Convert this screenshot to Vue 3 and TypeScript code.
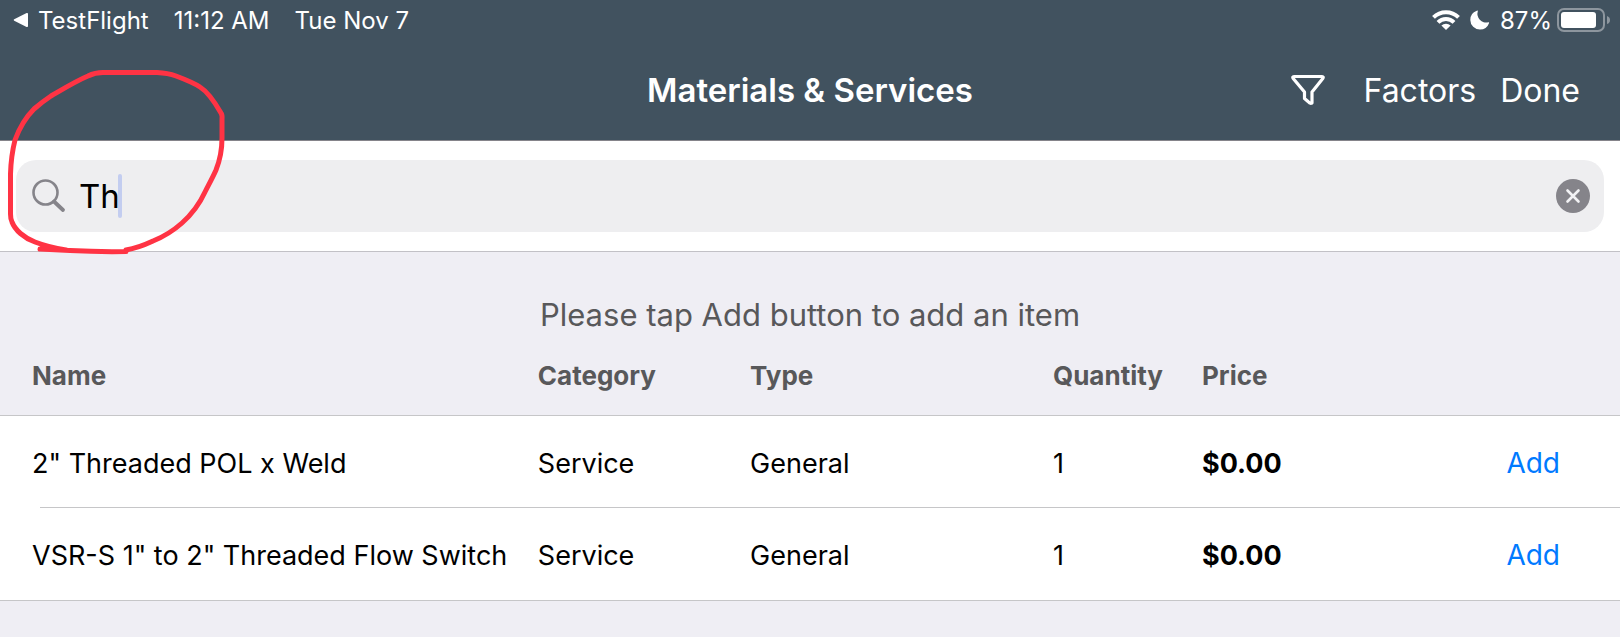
<script setup lang="ts">
import { computed, ref } from 'vue'

interface Item {
  name: string
  category: string
  type: string
  quantity: number
  price: number
}

const query = ref('Th')

const items: Item[] = [
  { name: '2" Threaded POL x Weld', category: 'Service', type: 'General', quantity: 1, price: 0 },
  { name: 'VSR-S 1" to 2" Threaded Flow Switch', category: 'Service', type: 'General', quantity: 1, price: 0 },
]

const matches = computed(() =>
  items.filter((item) => item.name.toLowerCase().includes(query.value.toLowerCase())),
)

const money = (value: number): string => `$${value.toFixed(2)}`
</script>

<template>
  <div class="screen">
    <header class="top">
      <div class="status">
        <a class="back" href="#">
          <svg width="16" height="16" viewBox="0 0 16 16" aria-hidden="true">
            <path d="M1.200 7.200 13.600 1.100Q15 .5 15 2V14Q15 15.500 13.600 14.900L1.200 8.800Q0 8 1.200 7.200Z" fill="#fff" />
          </svg>
          <span>TestFlight</span>
        </a>
        <span class="time">11:12 AM</span>
        <span>Tue Nov 7</span>
        <div class="indicators">
          <svg width="28" height="20" viewBox="0 0 28 20" aria-hidden="true">
            <g fill="none" stroke="#fff" stroke-width="4">
              <path d="M1.500 7.400A17.800 17.800 0 0 1 26.500 7.400" />
              <path d="M6 12.300A11.400 11.400 0 0 1 22 12.300" />
            </g>
            <path d="M14 20 9.400 15.600A6.600 6.600 0 0 1 18.600 15.600Z" fill="#fff" />
          </svg>
          <svg class="moon" width="20" height="20" viewBox="0 0 20 20" aria-hidden="true">
            <path d="M7.800 1.200A8.800 8.800 0 0 0 18.200 12.300Q19.500 12 19 13.300A9.700 9.700 0 0 1 10 19.600 9.700 9.700 0 0 1 .3 10 9.700 9.700 0 0 1 6.800.7Q8.100.2 7.800 1.200Z" fill="#fff" />
          </svg>
          <span>87%</span>
          <svg class="battery" width="54" height="24" viewBox="0 0 54 24" aria-hidden="true">
            <rect x="1" y="1" width="46" height="22" rx="6" fill="none" stroke="#8d969e" stroke-width="2" />
            <rect x="4" y="4" width="35" height="16" rx="3" fill="#fff" />
            <path d="M50 8Q53 9 53 12T50 16Z" fill="#8d969e" />
          </svg>
        </div>
      </div>
      <nav class="bar">
        <h1>Materials &amp; Services</h1>
        <div class="actions">
          <button type="button" aria-label="Filter">
            <svg width="36" height="32" viewBox="0 0 36 32" aria-hidden="true">
              <path d="M4 2.500H32Q34 2.500 32.800 4.500L22 18V29Q20 30 18 27.500L14.500 24.500V18L3.200 4.500Q2 2.500 4 2.500Z" fill="none" stroke="#fff" stroke-width="3.200" stroke-linejoin="round" />
            </svg>
          </button>
          <button class="factors" type="button">Factors</button>
          <button type="button">Done</button>
        </div>
      </nav>
    </header>

    <div class="search-area">
      <div class="search">
        <label class="field">
          <svg width="34" height="34" viewBox="0 0 34 34" aria-hidden="true">
            <circle cx="13.500" cy="13.500" r="12" fill="none" stroke="#85848a" stroke-width="2.600" />
            <path d="M22 22.500 31 31" stroke="#85848a" stroke-width="3.800" stroke-linecap="round" />
          </svg>
          <input v-model="query" type="text" aria-label="Search materials and services" />
          <span class="caret"></span>
        </label>
        <button type="button" aria-label="Clear search" @click="query = ''">
          <svg width="34" height="34" viewBox="0 0 34 34" aria-hidden="true">
            <circle cx="17" cy="17" r="17" fill="#85848a" />
            <path d="M11.500 11.500 22.500 22.500M22.500 11.500 11.500 22.500" stroke="#f2f2f4" stroke-width="2.600" stroke-linecap="round" />
          </svg>
        </button>
      </div>
      <svg class="ink" width="230" height="190" viewBox="0 66 230 190" aria-hidden="true">
        <path
          d="M126 251.500Q98 252 70 250.500L40 249M66 250Q48 247 35 242C24 238 15 230 12 222Q10.500 219 10.500 214V174Q11 156 15 140C19 129 26 117 34 109Q42 102 51 96C63 89 76 81 88 76Q95 72.500 103 72.500H157Q168 73 176 76C184 79 194 83 200 87C208 92 217 106 221 113Q222.500 115 222 120V138C222 150 220 160 216 170C213 177 208 186 205 192C199 205 191 215 182 223C173 231 163 237 153 241Q138 248 126 250"
          fill="none" stroke="#ff3344" stroke-width="5" stroke-linecap="round" stroke-linejoin="round"
        />
      </svg>
    </div>

    <main>
      <p class="hint">Please tap Add button to add an item</p>
      <table>
        <colgroup>
          <col class="c-name" />
          <col class="c-category" />
          <col class="c-type" />
          <col class="c-quantity" />
          <col />
          <col class="c-add" />
        </colgroup>
        <thead>
          <tr>
            <th scope="col">Name</th>
            <th scope="col">Category</th>
            <th scope="col">Type</th>
            <th scope="col">Quantity</th>
            <th scope="col">Price</th>
            <td></td>
          </tr>
        </thead>
        <tbody>
          <tr v-for="item in matches" :key="item.name">
            <td>{{ item.name }}</td>
            <td>{{ item.category }}</td>
            <td>{{ item.type }}</td>
            <td>{{ item.quantity }}</td>
            <td class="price">{{ money(item.price) }}</td>
            <td class="add"><button type="button">Add</button></td>
          </tr>
        </tbody>
      </table>
    </main>
  </div>
</template>

<style>
body {
  background: #efeef4;
}
</style>

<style scoped>
.screen {
  font-family: Inter, "Liberation Sans", sans-serif;
  color: #000;
}
button {
  padding: 0;
  border: 0;
  background: none;
  color: inherit;
  font: inherit;
}
svg {
  display: block;
}
.top {
  background: #41525f;
  border-bottom: 1px solid #85848a;
  color: #fff;
}
.status {
  display: flex;
  align-items: center;
  height: 40px;
  padding: 0 9px 0 13px;
  font-size: 24px;
}
.back {
  display: flex;
  align-items: center;
  gap: 9px;
  color: inherit;
  text-decoration: none;
}
.time {
  margin: 0 25px;
}
.indicators {
  display: flex;
  align-items: center;
  margin-left: auto;
}
.moon {
  margin: 0 10px;
}
.battery {
  margin-left: 5px;
}
.bar {
  display: grid;
  grid-template-columns: 1fr auto 1fr;
  align-items: center;
  height: 100px;
  padding: 0 40px;
  font-size: 32px;
}
h1 {
  grid-column: 2;
  margin: 0;
  font-size: 33px;
  font-weight: 600;
}
.actions {
  display: flex;
  align-items: center;
  justify-content: flex-end;
}
.factors {
  margin: 0 24px 0 38px;
}
.search-area {
  position: relative;
  padding: 19px 16px;
  border-bottom: 1px solid #c2c1c6;
  background: #fff;
}
.search {
  display: flex;
  align-items: center;
  height: 72px;
  padding: 0 14px 0 16px;
  border-radius: 20px;
  background: #eeeef0;
}
.field {
  display: flex;
  flex: 1;
  align-items: center;
}
input {
  field-sizing: content;
  margin: 0 -2px 0 13px;
  padding: 0;
  border: 0;
  outline: 0;
  background: none;
  color: #000;
  font: inherit;
  font-size: 33px;
}
.caret {
  width: 4px;
  height: 44px;
  border-radius: 2px;
  background: #c3cdf0;
}
.ink {
  position: absolute;
  top: -75px;
  left: 0;
  pointer-events: none;
}
.hint {
  margin: 0;
  padding-top: 41px;
  color: #58585a;
  font-size: 31px;
  line-height: 44px;
  text-align: center;
}
table {
  width: 100%;
  border-spacing: 0;
  table-layout: fixed;
  font-size: 27px;
}
.c-name {
  width: 33.200%;
}
.c-category {
  width: 13.100%;
}
.c-type {
  width: 18.700%;
}
.c-quantity {
  width: 9.200%;
}
.c-add {
  width: 12%;
}
th,
td {
  box-sizing: border-box;
  padding: 0;
  text-align: left;
  white-space: nowrap;
}
th:first-child,
td:first-child {
  padding-left: 32px;
}
thead th,
thead td {
  height: 79px;
  padding-bottom: 2px;
  border-bottom: 1px solid #c6c6c8;
  color: #58585a;
  font-size: 26px;
  font-weight: 700;
}
tbody {
  background: #fff;
}
tbody td {
  height: 92px;
  padding-top: 2px;
}
tbody tr:not(:last-child) {
  background: linear-gradient(#c6c6c8, #c6c6c8) 40px 100% / 100% 1px no-repeat;
}
tbody tr:last-child td {
  height: 93px;
  border-bottom: 1px solid #c6c6c8;
}
.price {
  font-weight: 700;
}
td.add {
  padding-right: 60px;
  color: #007aff;
  font-size: 28px;
  text-align: right;
}
</style>
